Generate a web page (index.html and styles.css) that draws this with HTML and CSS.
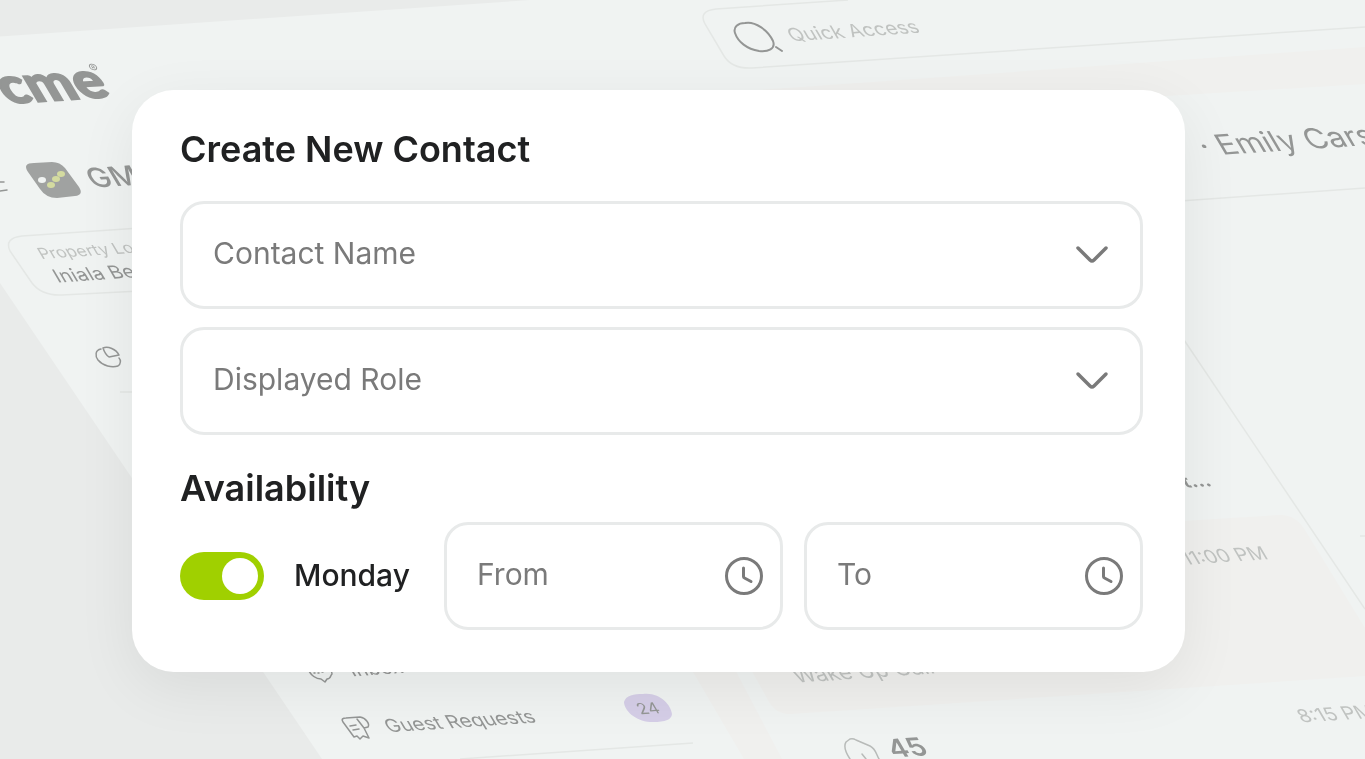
FILE: index.html
```html
<!DOCTYPE html>
<html lang="en">
<head>
  <meta charset="UTF-8">
  <meta name="viewport" content="width=device-width, initial-scale=1.0">
  <title>Create New Contact</title>
  <link rel="stylesheet" href="styles.css">
</head>
<body>

  <!-- tilted dashboard behind the form -->
  <svg class="backdrop" viewBox="0 0 1365 759" preserveAspectRatio="xMidYMid slice" aria-hidden="true">
    <path class="screen" d="M0 36.500L530 0H1365V759H322L0 283Z"/>

    <path class="tint" d="M760 90L1365 47V84L1150 97H760Z"/>
    <path class="tint" d="M1150 523L1280 515Q1296 515 1305 530L1365 628V676L790 714Q775 714 768 700L740 650H1150Z"/>
    <path class="tint" d="M686 660H730L782 759H744Z"/>

    <g class="rule">
      <path d="M848 0L716 9Q698 11 705 24L724 56Q732 69 752 68L1365 27"/>
      <path d="M1180 201L1365 188"/>
      <path d="M1180 334L1365 609"/>
      <path d="M1360 536H1365"/>
      <path d="M140 228L22 236Q4 238 10 251L32 283Q42 296 62 295L140 291"/>
      <path d="M120 392H140"/>
      <path d="M460 759L693 743"/>
    </g>

    <path class="badge" d="M643 694C660 692 671 705 672 714C671 722 660 722 650 722C635 721 624 710 624 702C626 695 634 694 643 694Z"/>

    <!-- product tile -->
    <path class="tile" d="M34 163L52 162Q60 162 65 168L79 187Q84 195 75 196L57 198Q46 198 40 189L28 172Q22 163 34 163Z"/>
    <ellipse class="dot-light" cx="42" cy="180" rx="4" ry="3"/>
    <g class="dot-lime">
      <ellipse cx="51" cy="185" rx="4" ry="3"/>
      <ellipse cx="56" cy="179" rx="4" ry="3"/>
      <ellipse cx="61" cy="174" rx="4" ry="3"/>
    </g>

    <g class="icon">
      <path class="thick" d="M745 23C755 21 768 30 773 41C776 49 768 52 759 51C747 49 738 42 735 33C733 27 738 23 745 23ZM776 47L782 51"/>
      <path d="M0 182L4 182M0 191L7 190"/>
      <path d="M101 349C95 350 95 356 98 360C103 366 112 368 118 366C121 364 121 360 119 358M103 348C108 346 116 349 119 355L109 357C106 355 104 351 103 348Z"/>
      <path d="M308 668C310 676 317 679 321 679L325 682L327 679C331 679 330 676 332 674L331 668M314 673H315M318 673H319M322 672H323"/>
      <path d="M343 722C341 719 343 718 346 718L360 717C366 718 370 724 368 727L364 728L357 719M343 722L354 737L357 736L360 739L363 736L369 738L364 728M350 726L356 725M353 730L359 729"/>
      <path class="faint" d="M850 739L846 742C843 747 846 753 850 759M850 739Q853 738 856 740L870 746C876 749 876 754 879 759M862 754L866 759"/>
    </g>

    <g class="plane">
      <text class="logo" x="53" y="114">cme</text>
      <text class="mark" x="47" y="86">®</text>
      <text class="title" x="-17" y="212">GMS</text>
      <text class="hint small" x="-107" y="286">Property Location</text>
      <text class="body" x="-105" y="313">Iniala Beach</text>
      <text class="hint" x="738" y="104">Quick Access</text>
      <text class="name" x="1070" y="260">· Emily Carson</text>
      <text class="strong" x="890" y="621">t...</text>
      <text class="hint end" x="903" y="705">11:00 PM</text>
      <text class="hint large" x="379" y="805">Wake Up Call</text>
      <text class="number" x="429" y="894">45</text>
      <text class="hint" x="841" y="886">8:15 PM</text>
      <text class="body" x="671" y="932">Show</text>
      <text class="body" x="-45" y="765">Inbox</text>
      <text class="body" x="-42" y="829">Guest Requests</text>
      <text class="small" x="210" y="828">24</text>
    </g>
  </svg>

  <main class="page">
    <form class="card">
      <h2>Create New Contact</h2>
      <div class="field">
        <select id="contact" name="contact" aria-label="Contact Name">
          <option value="">Contact Name</option>
        </select>
        <svg class="chevron" viewBox="0 0 40 40" aria-hidden="true"><path d="M6 13L18 25Q20 27 22 25L34 13"/></svg>
      </div>
      <div class="field">
        <select id="role" name="role" aria-label="Displayed Role">
          <option value="">Displayed Role</option>
        </select>
        <svg class="chevron" viewBox="0 0 40 40" aria-hidden="true"><path d="M6 13L18 25Q20 27 22 25L34 13"/></svg>
      </div>

      <h2>Availability</h2>
      <div class="availability">
        <div class="day">
          <input type="checkbox" id="monday" name="monday" class="toggle" checked>
          <label for="monday">Monday</label>
        </div>
        <div class="field time">
          <input type="text" id="from" name="from" placeholder="From" aria-label="From">
          <svg class="clock" viewBox="0 0 40 40" aria-hidden="true"><circle cx="20" cy="20" r="17.500"/><path d="M19.500 12V20.500Q19.500 21.500 20.500 22L27 25.500"/></svg>
        </div>
        <div class="field time">
          <input type="text" id="to" name="to" placeholder="To" aria-label="To">
          <svg class="clock" viewBox="0 0 40 40" aria-hidden="true"><circle cx="20" cy="20" r="17.500"/><path d="M19.500 12V20.500Q19.500 21.500 20.500 22L27 25.500"/></svg>
        </div>
      </div>
    </form>
  </main>

</body>
</html>
```

FILE: styles.css
```css
* {
  box-sizing: border-box;
}

body {
  margin: 0;
  min-height: 100vh;
  font-family: Inter, "Liberation Sans", sans-serif;
  color: #202122;
  background-color: #e9ebea;
}

/* dashboard */
.backdrop {
  position: fixed;
  inset: 0;
  width: 100%;
  height: 100%;
}

.screen {
  fill: #f0f3f2;
}

.tint {
  fill: #f0f0ee;
}

.rule {
  fill: none;
  stroke: #e4e7e5;
  stroke-width: 1.5;
}

.badge {
  fill: #d5cee7;
}

.tile {
  fill: #a0a2a1;
}

.dot-light {
  fill: #f0f3f2;
}

.dot-lime {
  fill: #d4dba0;
}

.icon {
  fill: none;
  stroke: #949695;
  stroke-width: 1.5;
  stroke-linecap: round;
  stroke-linejoin: round;
}

.icon .thick {
  stroke-width: 2;
}

.icon .faint {
  stroke: #b8bbb9;
}

.plane {
  transform: matrix(1, -0.068, 0.52, 0.88, 0, 0);
  fill: #949695;
  font-size: 20px;
}

.plane .hint {
  fill: #c0c3c1;
}

.plane .small {
  font-size: 17px;
}

.plane .large {
  font-size: 22px;
}

.plane .end,
.plane .strong,
.plane .logo {
  text-anchor: end;
}

.plane .logo {
  font-family: Lato, sans-serif;
  font-size: 56px;
  font-weight: 900;
  stroke: #949695;
  stroke-width: 2;
}

.plane .mark {
  font-size: 13px;
}

.plane .title {
  font-size: 30px;
  font-weight: 500;
}

.plane .name {
  font-size: 31px;
}

.plane .strong {
  font-weight: 700;
}

.plane .number {
  font-size: 28px;
  font-weight: 600;
}

/* form */
.page {
  position: relative;
  padding: 90px 180px 87px 132px;
}

.card {
  padding: 35px 42px 42px 48px;
  border-radius: 42px;
  background-color: #ffffff;
  box-shadow: 0 16px 60px rgba(0, 0, 0, 0.07);
}

h2 {
  margin: 0 0 28px;
  font-size: 36px;
  line-height: 48px;
  font-weight: 600;
}

.field {
  display: flex;
  align-items: center;
  height: 108px;
  padding: 0 28px 0 30px;
  border: 3px solid #e8eaea;
  border-radius: 24px;
  background-color: #ffffff;
}

.field + .field {
  margin-top: 18px;
}

.field + h2 {
  margin: 29px 0 10px;
}

.field select,
.field input {
  flex: 1;
  min-width: 0;
  height: 100%;
  padding: 0 0 4px;
  border: none;
  outline: none;
  appearance: none;
  background: none;
  color: #7a7a7a;
  font-family: inherit;
  font-size: 30px;
}

.field input::placeholder {
  color: #7a7a7a;
  opacity: 1;
}

.field svg {
  flex: none;
  width: 40px;
  height: 40px;
  fill: none;
  stroke: #7a7a7a;
  stroke-width: 3;
  stroke-linecap: round;
  stroke-linejoin: round;
}

.field .chevron {
  stroke-width: 3.5;
}

.availability {
  display: grid;
  grid-template-columns: 243px minmax(0, 1fr) minmax(0, 1fr);
  column-gap: 21px;
  align-items: center;
}

.availability .time {
  margin: 0;
  padding-right: 16px;
}

.day {
  display: flex;
  align-items: center;
  gap: 30px;
}

.day label {
  padding-bottom: 3px;
  font-size: 30px;
  font-weight: 500;
}

.toggle {
  display: flex;
  align-items: center;
  justify-content: flex-end;
  width: 84px;
  height: 48px;
  margin: 0;
  padding: 6px;
  border-radius: 24px;
  appearance: none;
  background-color: #c8cbca;
  cursor: pointer;
}

.toggle::before {
  content: "";
  width: 36px;
  height: 36px;
  border-radius: 50%;
  background-color: #ffffff;
}

.toggle:checked {
  background-color: #a0d000;
}

.toggle:not(:checked) {
  justify-content: flex-start;
}
```
